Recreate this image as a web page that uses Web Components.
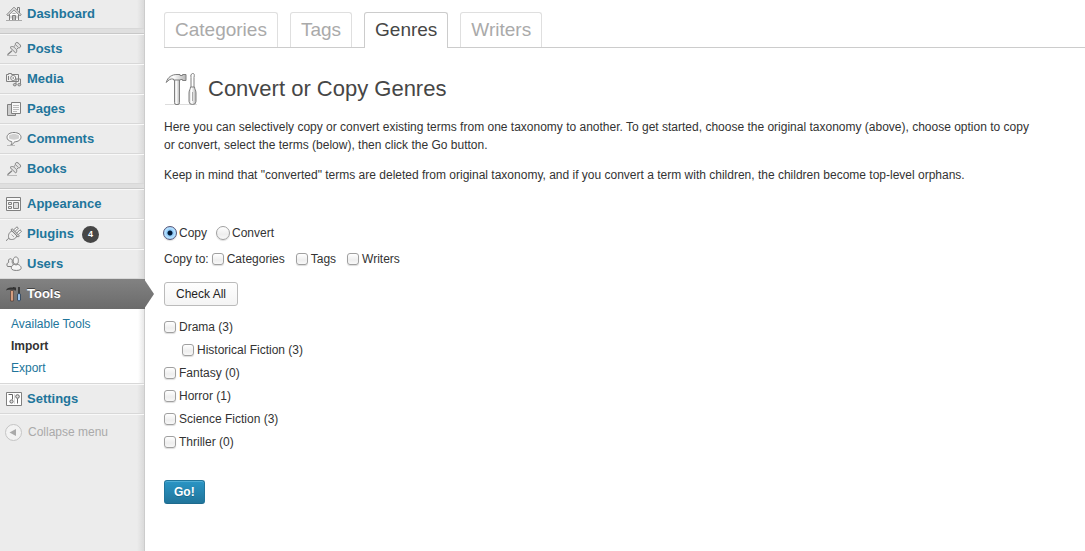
<!DOCTYPE html>
<html lang="en">
<head>
<meta charset="utf-8">
<meta name="viewport" content="width=device-width, initial-scale=1">
<title>Convert or Copy Genres</title>
<style>
  body { margin: 0; background: #fff; color: #333; font: 12px/18px "Liberation Sans", Arial, sans-serif; }
</style>
</head>
<body>
<admin-page>
  <admin-menu slot="menu">
    <menu-item icon="home" first>Dashboard</menu-item>
    <menu-gap></menu-gap>
    <menu-item icon="pin">Posts</menu-item>
    <menu-item icon="media">Media</menu-item>
    <menu-item icon="pages">Pages</menu-item>
    <menu-item icon="comment">Comments</menu-item>
    <menu-item icon="pin">Books</menu-item>
    <menu-gap></menu-gap>
    <menu-item icon="window">Appearance</menu-item>
    <menu-item icon="plug" count="4">Plugins</menu-item>
    <menu-item icon="users">Users</menu-item>
    <menu-item icon="tools" current>Tools</menu-item>
    <sub-menu></sub-menu>
    <menu-item icon="sliders">Settings</menu-item>
    <menu-collapse>Collapse menu</menu-collapse>
  </admin-menu>
  <taxonomy-tabs slot="tabs"></taxonomy-tabs>
  <page-title>Convert or Copy Genres</page-title>
  <help-text>
    <p>Here you can selectively copy or convert existing terms from one taxonomy to another. To get started, choose the original taxonomy (above), choose option to copy or convert, select the terms (below), then click the Go button.</p>
    <p>Keep in mind that "converted" terms are deleted from original taxonomy, and if you convert a term with children, the children become top-level orphans.</p>
  </help-text>
  <convert-form></convert-form>
</admin-page>

<script>
const icons = {
  home: '<path d="M3.500 8v6.500h9V8" fill="#fff"/><path d="M.8 8.700 8 1.200l7.200 7.500-1.200 1L8 3.800 2 9.700z" fill="#eee"/><path d="M11.500 4V1.500h2V7" fill="none"/><path d="M6.500 14.500v-5h3v5" fill="#bbb"/><path d="M6.500 7.500h3M5 9.500v3M11 9.500v3" stroke="#aaa"/><path d="M0 14.500h16" stroke="#aaa"/>',
  pin: '<path d="M1.500 13.800 6 9.800" fill="none" stroke-width="1.200"/><path d="M9.500 2.200c.8-1 2-1 3.700.6s1.800 2.900.7 3.800c-.8.500-1.500.2-1.500.2l-1.900 1.700c.5 1.500.2 2.500-.8 3.500L4 6.500c1-1 2.200-1.200 3.600-.7l1.900-1.800s-.4-1 0-1.800z" fill="#e2e2e2"/><path d="m7.800 6 2.600 2.400M10 4l2.300 2.500" stroke="#999"/><path d="M1 14.500h10" stroke="#bbb"/>',
  media: '<path d="M.5 3.500h2v-1h3v1h7v7H.5z" fill="#eee"/><circle cx="7.200" cy="7" r="2.500" fill="#fff"/><circle cx="7.200" cy="7" r=".5"/><path d="M2.500 5v4"/><path d="M10 13.500V8h4.500v5.500" fill="none"/><ellipse cx="8.800" cy="13.700" rx="1.500" ry="1.200" fill="#ccc"/><ellipse cx="13.300" cy="13.700" rx="1.500" ry="1.200" fill="#ccc"/>',
  pages: '<path d="M1.500 3.500h8v11h-8z" fill="#ccc"/><path d="M5.500 1.500h9v11h-9z" fill="#f8f8f8"/><path d="M7 4.500h6M7 6.500h6M7 8.500h6M7 10.500h4" stroke="#bbb"/>',
  comment: '<path d="M8 1.500c4.200 0 7 2 7 4.700S12 10.800 8.500 10.800c-.8 1.500-1.800 2.700-3.700 3.200.9-1 1.100-2.200.9-3.400C2.700 10 1 8.600 1 6.200 1 3.500 3.800 1.500 8 1.500z" fill="#fafafa"/><path d="M3 4.500c3-2 7-2 10 0v3c-3 1.500-7 1.500-10 0z" fill="#d0d0d0" stroke="none"/><path d="M1 14.500h8" stroke="#bbb"/>',
  window: '<path d="M.5 1.500h14v13H.5z" fill="#f8f8f8"/><path d="M1 4.500h13"/><path d="M2.500 6.500h3v2h-3zM2.500 10.500h3v2h-3z" fill="#eee"/><path d="M7.500 6.500h5v6h-5z" fill="#ddd"/>',
  plug: '<path d="M0 14.500c2-.2 1.500-2.200 3.500-2.700" fill="none"/><path d="M3 12.800c-1.200-3-.3-6.500 2.900-7.800l5 5c-1.200 3-4.700 4.500-7.900 2.800z" fill="#eee"/><path d="m5 3.900 7.200 7.200 1.200-1.200-7.200-7.200z" fill="#ddd"/><path d="M7.500 4 11 .8l1.400 1.300L9 5.500zM10.700 7.200l3.300-3.400 1.500 1.400-3.400 3.400z" fill="#fff"/><path d="m5.500 8.500 2.500 2.500" stroke="#aaa"/>',
  users: '<path d="M1.500 10.500c-1.500-2 0-3.800 1.300-4.300-.8-1.700 0-3.500 1.600-3.500s2.500 1.800 1.600 3.500C7.200 7 7.500 9 7 10.500z" fill="#eee"/><path d="M7.500 7C6.800 3 7.800 1 9.800 1s3.200 2 2.200 6c0 1.500-4.500 1.500-4.500 0z" fill="#f4f4f4"/><path d="M8.300 8.400c-2.300.6-4 3.300-2.300 5 1.300 1.400 7.300 1.400 8.600 0 1.500-1.700-.3-4.400-2.800-5-1 .6-2.500.6-3.500 0z" fill="#f6f6f6"/>',
  sliders: '<path d="M.5 1.500h15v13H.5z" fill="#fff"/><path d="M2.500 3.500h4v5M11.500 7.500v5" stroke="#666"/><circle cx="5.500" cy="10.500" r="1.600" fill="#ddd" stroke="#666"/><circle cx="11.500" cy="5.500" r="1.800" fill="#ddd" stroke="#666"/><path d="M8.500 3v10" stroke="#ddd"/>',
  tools: '<g stroke="none"><path d="M0 4.500C.8 2 3 1.300 5 1.500h2V1h1.500v.500H10v3H8.500v-.7H3.500C2 3.700 1 3.800 0 4.500z" fill="#333"/><path d="M4.600 4.500h2.800v10.500H4.600z" fill="#e0a585" stroke="#4a3a33" stroke-width=".7"/><path d="M12.300 1h1.400v7h-1.400z" fill="#222"/><path d="M11.500 8.200q1.500-1.500 3 0v6q-1.500 1.500-3 0z" fill="#9cc4ee" stroke="#26384e" stroke-width=".8"/></g>'
};

const define = (name, markup, setup) => {
  const template = document.createElement('template');
  customElements.define(name, class extends HTMLElement {
    constructor() {
      super();
      this.attachShadow({ mode: 'open' });
    }
    connectedCallback() {
      if (this.shadowRoot.childNodes.length) return;
      template.innerHTML = typeof markup === 'function' ? markup(this) : markup;
      this.shadowRoot.append(template.content.cloneNode(true));
      if (setup) setup(this.shadowRoot);
    }
  });
};

define('admin-page', `
  <style>
    :host { display: flex; min-height: 100vh; }
    main { flex: 1; min-width: 0; padding-top: 12px; }
    .body { padding: 0 44px 24px 19px; }
    .tabs { padding-left: 19px; }
  </style>
  <slot name="menu"></slot>
  <main><div class="tabs"><slot name="tabs"></slot></div><div class="body"><slot></slot></div></main>
`);

define('admin-menu', `
  <style>
    :host { display: block; flex: none; width: 144px; border-right: 1px solid #ccc;
      background: linear-gradient(to left, #dadada, #ececec 7px); }
  </style>
  <nav aria-label="Main menu"><slot></slot></nav>
`);

define('menu-gap', `
  <style>
    :host { display: block; height: 4px; background: #dfdfdf; border-bottom: 1px solid #c8c8c8; }
  </style>
`);

define('menu-item', el => `
  <style>
    :host { display: block; position: relative; }
    a { display: flex; align-items: center; box-sizing: border-box; height: 30px; padding-left: 6px;
      border-top: 1px solid #f9f9f9; border-bottom: 1px solid #d8d8d8;
      color: #21759b; font-weight: bold; font-size: 13px; line-height: 18px; text-decoration: none; }
    :host([first]) a { height: 29px; border-top: 0; }
    svg { width: 16px; height: 16px; margin-right: 5px; stroke: #808080; }
    .count { width: 17px; margin-left: 8px; border-radius: 9px; background: #464646; color: #fff;
      font-size: 9px; line-height: 17px; text-align: center; }
    :host([current]) a { margin-right: -1px; border: 0; background: linear-gradient(#828282, #6b6b6b);
      color: #fff; text-shadow: 0 -1px 0 #444; }
    :host([current])::after { content: ""; position: absolute; left: 100%; top: 0; width: 10px; height: 30px;
      background: linear-gradient(#828282, #6b6b6b); clip-path: polygon(0 0, 100% 50%, 0 100%); }
  </style>
  <a href="#"${el.hasAttribute('current') ? ' aria-current="true"' : ''}>
    <svg viewBox="0 0 16 16" fill="none" aria-hidden="true">${icons[el.getAttribute('icon')]}</svg>
    <slot></slot>${el.hasAttribute('count') ? `<span class="count">${el.getAttribute('count')}</span>` : ''}
  </a>
`);

define('sub-menu', `
  <style>
    :host { display: block; background: linear-gradient(to left, #e8e8e8, #fff 6px); border-bottom: 1px solid #d8d8d8; }
    ul { margin: 0; padding: 4px 0 4px 11px; list-style: none; line-height: 22px; }
    a { color: #21759b; text-decoration: none; }
    a[aria-current] { color: #333; font-weight: bold; }
  </style>
  <ul>
    <li><a href="#">Available Tools</a></li>
    <li><a href="#" aria-current="page">Import</a></li>
    <li><a href="#">Export</a></li>
  </ul>
`);

define('menu-collapse', `
  <style>
    :host { display: block; border-top: 1px solid #f9f9f9; }
    button { display: flex; align-items: center; gap: 6px; height: 34px; padding: 0 0 0 5px; border: 0;
      background: none; color: #aaa; font: 12px/18px "Liberation Sans", Arial, sans-serif; }
    svg { width: 17px; height: 17px; }
  </style>
  <button type="button">
    <svg viewBox="0 0 17 17" aria-hidden="true"><circle cx="8.500" cy="8.500" r="8" fill="#f3f3f3" stroke="#c4c4c4"/><path d="M4.500 8.500 11 5v7z" fill="#aaa"/></svg>
    <slot></slot>
  </button>
`);

define('taxonomy-tabs', `
  <style>
    :host { display: block; border-bottom: 1px solid #ccc; }
    nav { display: flex; gap: 12px; }
    a { box-sizing: border-box; height: 35px; padding: 0 10px; border: 1px solid #dfdfdf; border-bottom: 0;
      border-radius: 3px 3px 0 0; color: #aaa; font: 19px/34px "Liberation Sans", Arial, sans-serif; text-decoration: none; }
    a[aria-current] { height: 36px; margin-bottom: -1px; border-color: #ccc; background: #fff; color: #464646; }
  </style>
  <nav aria-label="Taxonomies">
    <a href="#">Categories</a><a href="#">Tags</a><a href="#" aria-current="page">Genres</a><a href="#">Writers</a>
  </nav>
`);

define('page-title', `
  <style>
    :host { display: flex; align-items: center; gap: 8px; height: 36px; margin-top: 23px; }
    svg { width: 36px; height: 36px; }
    h1 { margin: 0; color: #464646; font: 22px/36px "Liberation Sans", Arial, sans-serif; }
  </style>
  <svg viewBox="0 0 36 36" fill="none" stroke="#808080" aria-hidden="true">
    <defs><linearGradient id="steel"><stop stop-color="#ccc"/><stop offset=".35" stop-color="#fff"/><stop offset="1" stop-color="#b5b5b5"/></linearGradient></defs>
    <path d="M1 33.500h32" stroke="#ddd"/>
    <path d="M10.500 8v23.500q0 2 1.500 2h2q1.500 0 1.500-2V8z" fill="url(#steel)"/>
    <path d="M2.300 11.500C3.500 6 8 3.500 13 3.500h3v1h2.500v-1H22v6h-3.500v-1h-2v.500H9.500v-1C6.500 7.500 4.500 9 2.300 11.500z" fill="url(#steel)"/>
    <path d="M27 9V6.500Q26 3 28.500 2.500T30 6.500V18h-3z" fill="#fff"/>
    <path d="M26.500 16h4c0 2 1.500 3 1.500 6v8.500q0 3-3.500 3T25 30.500V22c0-3 1.500-4 1.500-6z" fill="url(#steel)"/>
    <path d="M28.500 21v9" stroke="#aaa"/>
  </svg>
  <h1><slot></slot></h1>
`);

define('help-text', `
  <style>
    :host { display: block; margin-top: 11px; }
    ::slotted(p) { margin: 0 0 12px; }
  </style>
  <slot></slot>
`);

const controls = `
  label { display: inline-flex; align-items: center; gap: 3px; }
  input { appearance: none; box-sizing: border-box; flex: none; width: 12px; height: 12px; margin: 0; border: 1px solid #a0a0a0;
    border-radius: 3px; background: linear-gradient(#fff, #eee 60%, #f8f8f8); box-shadow: 0 1px 1px #ddd; }
`;

define('convert-form', `
  <style>
    :host { display: block; margin-top: 40px; }
    ${controls}
    fieldset { display: flex; min-width: 0; margin: 0; padding: 0; border: 0; }
    .mode { gap: 9px; margin-left: -1px; line-height: 18px; }
    .mode label { gap: 2px; }
    input[type=radio] { width: 14px; height: 14px; border-radius: 50%; }
    input[type=radio]:checked { border-color: #557; background: radial-gradient(circle at 50% 50%, #001a38 0 2px, #8cc8f8 3px, #b8e2ff 5px, #79b4ec); }
    .target { gap: 11px; margin-top: 8px; align-items: center; }
    .target span { margin-right: -8px; }
    button { display: block; height: 24px; padding: 0 11px; border: 1px solid #bbb; border-radius: 3px;
      background: linear-gradient(#fefefe, #f4f4f4); color: #222; font: 12px/22px "Liberation Sans", Arial, sans-serif; }
    .check { margin-top: 14px; }
    .go { margin-top: 26px; padding: 0 9px; border-color: #21759b #21759b #1e6a8d; background: linear-gradient(#2a95c5, #21759b);
      box-shadow: inset 0 1px 0 #78c8e680; color: #fff; font-weight: bold; text-shadow: 0 1px 0 #0003; }
    ul { margin: 0; padding: 0; list-style: none; line-height: 23px; }
    .terms { margin-top: 10px; }
    .terms input { margin-bottom: 1px; }
    ul ul { padding-left: 18px; }
    li label { display: flex; width: max-content; }
  </style>
  <form>
    <fieldset class="mode" aria-label="Action">
      <label><input type="radio" name="mode" checked>Copy</label>
      <label><input type="radio" name="mode">Convert</label>
    </fieldset>
    <fieldset class="target" aria-label="Copy to">
      <span>Copy to:</span>
      <label><input type="checkbox">Categories</label>
      <label><input type="checkbox">Tags</label>
      <label><input type="checkbox">Writers</label>
    </fieldset>
    <button class="check" type="button">Check All</button>
    <ul class="terms">
      <li><label><input type="checkbox">Drama (3)</label>
        <ul><li><label><input type="checkbox">Historical Fiction (3)</label></li></ul>
      </li>
      <li><label><input type="checkbox">Fantasy (0)</label></li>
      <li><label><input type="checkbox">Horror (1)</label></li>
      <li><label><input type="checkbox">Science Fiction (3)</label></li>
      <li><label><input type="checkbox">Thriller (0)</label></li>
    </ul>
    <button class="go" type="submit">Go!</button>
  </form>
`, root => {
  root.querySelector('form').addEventListener('submit', event => event.preventDefault());
  root.querySelector('.check').addEventListener('click', () => {
    root.querySelectorAll('.terms input').forEach(box => { box.checked = true; });
  });
});
</script>
</body>
</html>
